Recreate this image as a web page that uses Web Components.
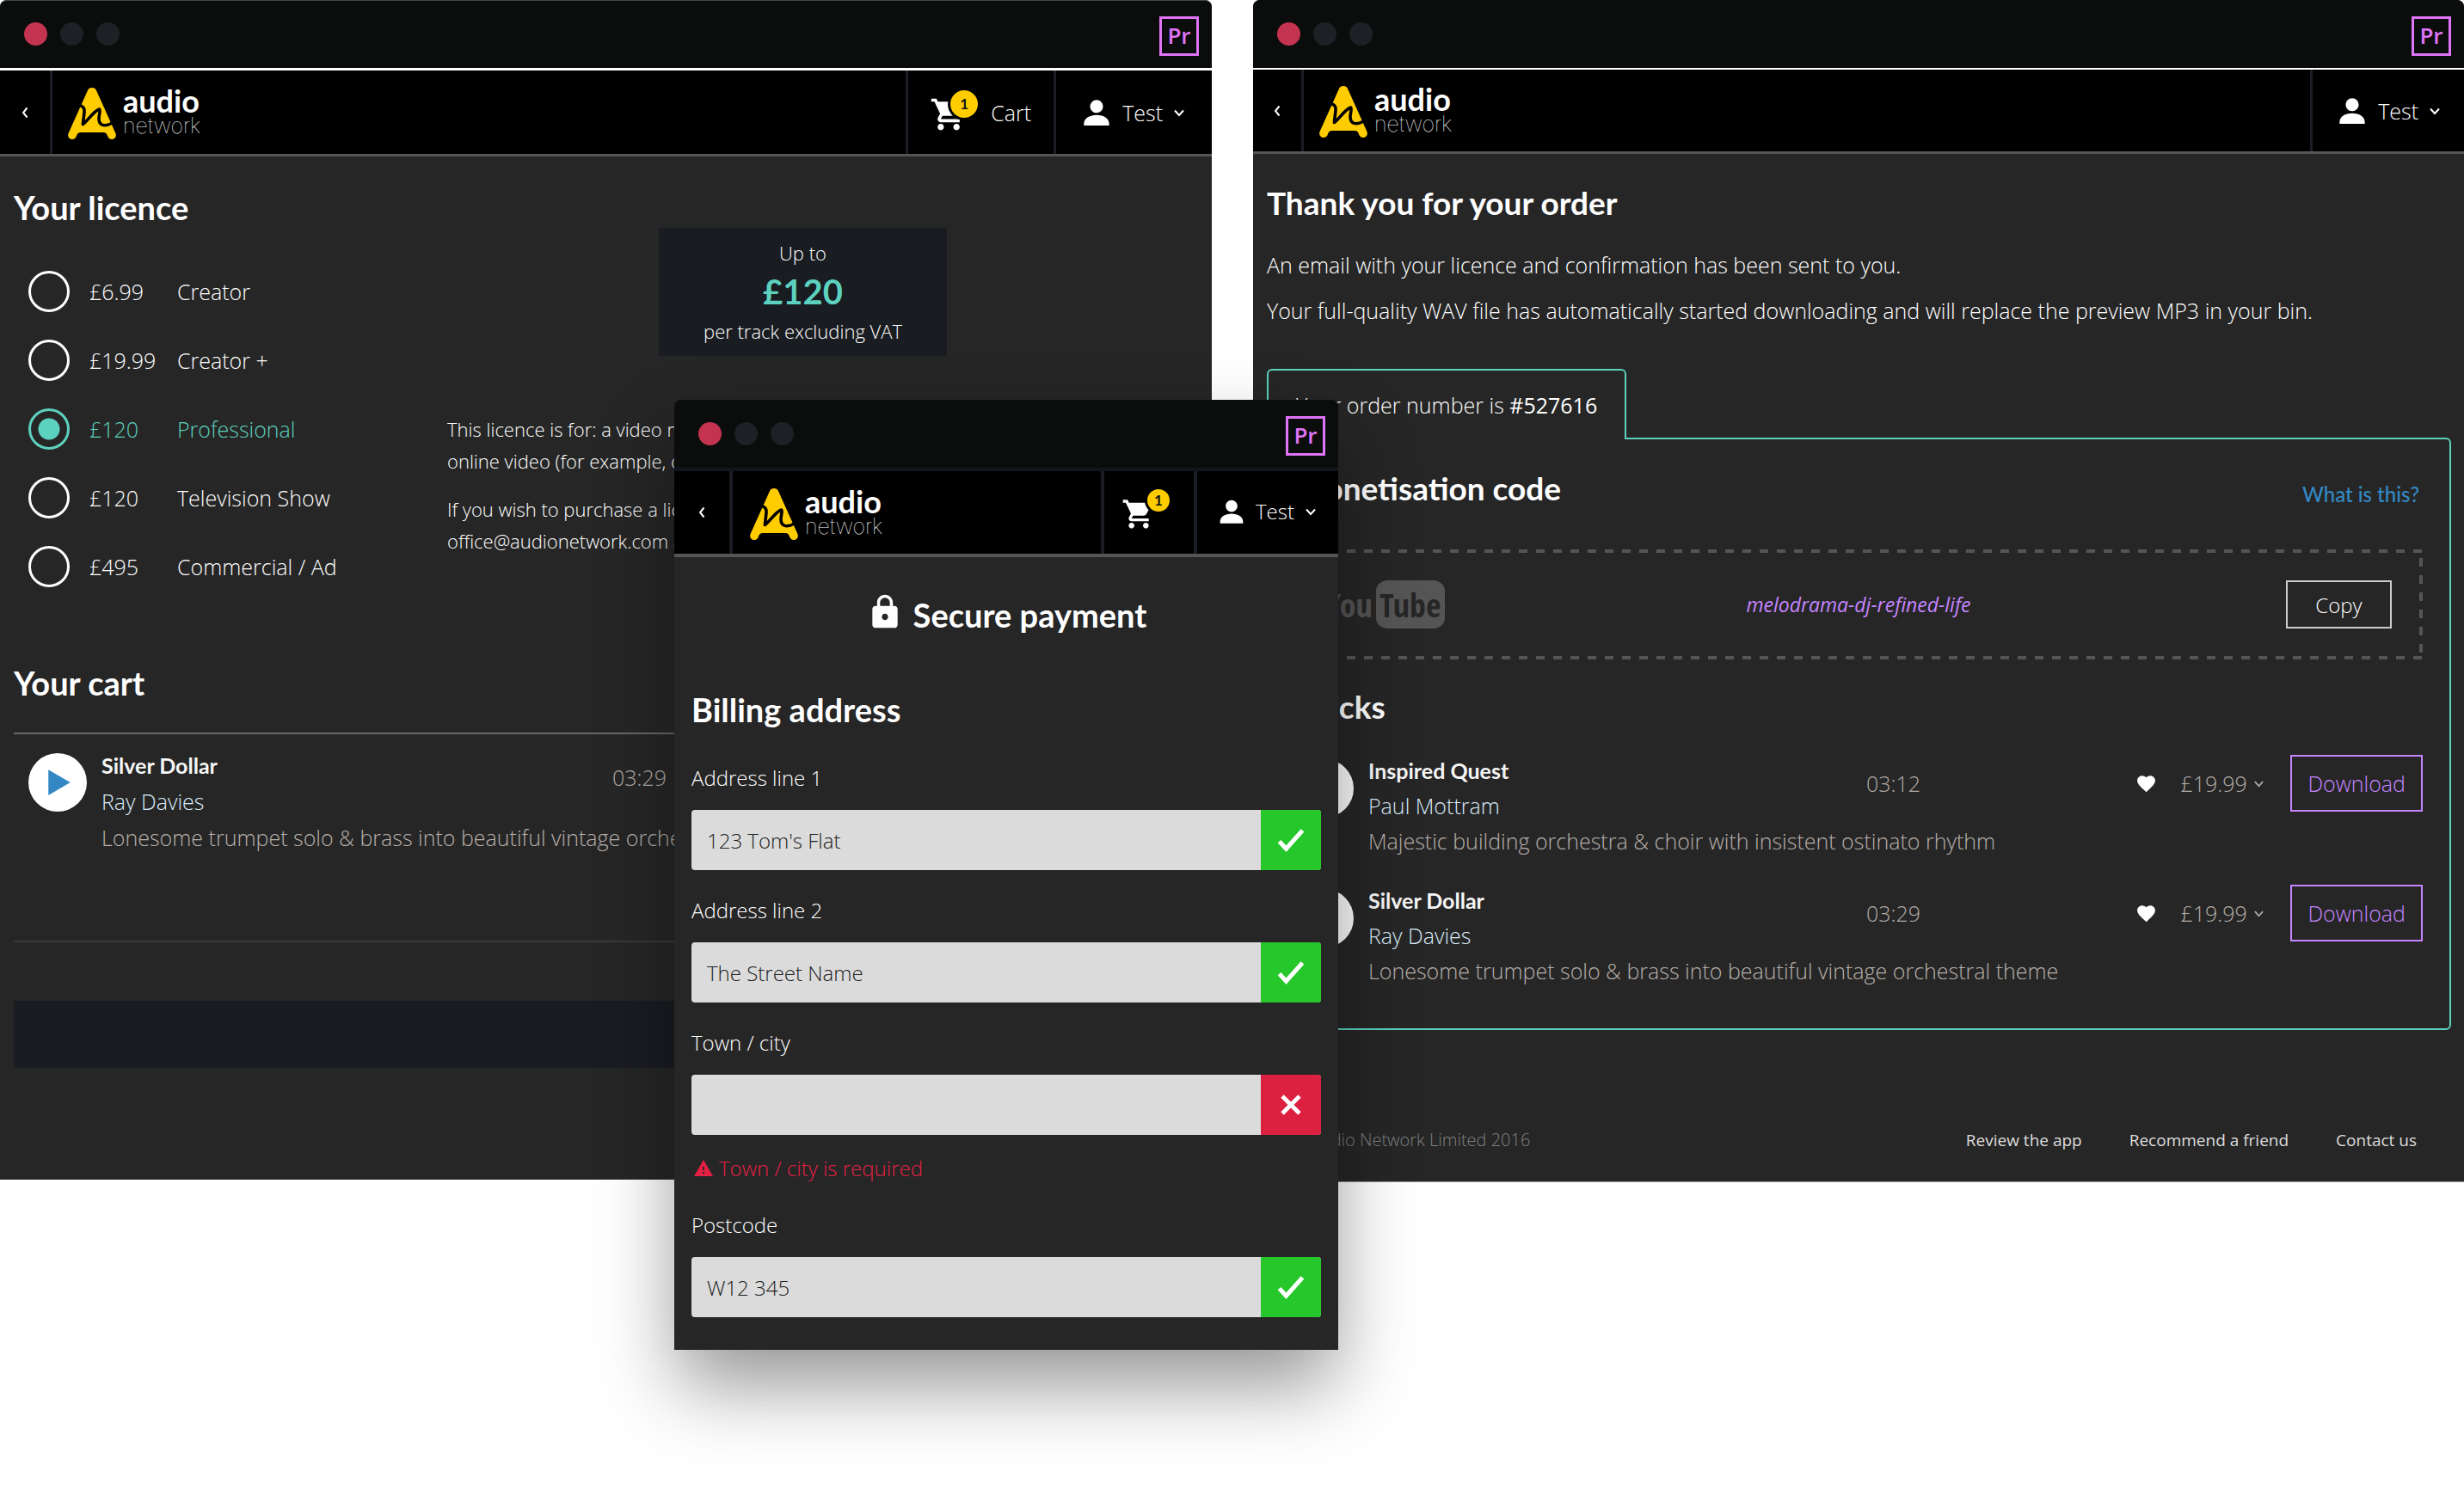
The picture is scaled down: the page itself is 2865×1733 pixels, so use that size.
<!DOCTYPE html>
<html lang="en">
<head>
<meta charset="utf-8">
<title>Audio Network for Premiere Pro</title>
<style>
  html, body { margin: 0; background: #fff; }
  body {
    --teal: #5dd1bf; --purple: #c585ff; --pink: #e074f8; --blue: #3388c4; --navy: #191c21;
    --head: Lato, "Open Sans", sans-serif;
    font: 300 25px "Open Sans", "Noto Sans", sans-serif;
    color: #fff;
  }
</style>
</head>
<body>
<desktop-stage>
  <app-window slot="cart" class="cart">
    <nav-bar slot="nav" cart="Cart"></nav-bar>
    <cart-view></cart-view>
  </app-window>
  <app-window slot="order" class="order">
    <nav-bar slot="nav"></nav-bar>
    <order-view></order-view>
  </app-window>
  <app-window slot="payment" class="payment">
    <nav-bar slot="nav" cart=""></nav-bar>
    <payment-view></payment-view>
  </app-window>
</desktop-stage>

<script>
const define = (name, render) => customElements.define(name, class extends HTMLElement {
  connectedCallback() {
    if (this.shadowRoot) return;
    this.attachShadow({ mode: 'open' }).innerHTML = '<style>*{box-sizing:border-box}</style>' + render(this);
  }
});

/* Three windows on one canvas: two side by side, the payment window over both. */
define('desktop-stage', () => `
<style>
  :host { display: grid; grid-template-columns: 784fr 625fr 48fr 99fr 1309fr; align-items: start; min-height: 100vh; overflow: hidden; }
  ::slotted(*) { grid-row: 1; }
  ::slotted([slot=cart]) { grid-column: 1 / 3; --nav-height: 97px; --top-edge: #444846; --bar-rule: 3px solid #fff; }
  ::slotted([slot=order]) { grid-column: 4 / 6; --nav-height: 95px; --bar-rule: 2px solid #fff; --back: 56px; --user-pad: 24px; --end: 28px; --title-size: 37px; border-bottom: 1px solid #8a8a8a; }
  ::slotted([slot=payment]) {
    grid-column: 2 / 5; margin-top: 465px; z-index: 1;
    --nav-height: 96px; --bar-rule: 4px solid #12161c; --rule: 4px; --back: 64px; --logo-pad: 20px; --icon: 40px; --nav-size: 24px;
    --pad: 20px; --cart-end: 44px; --end: 26px; --lift: 3px; --badge: 26px; --badge-left: 30px; --badge-top: -5px;
    box-shadow: 0 45px 90px -4px rgba(0,0,0,.42);
  }
</style>
<slot name="cart"></slot><slot name="order"></slot><slot name="payment"></slot>`);

define('app-window', () => `
<style>
  :host { display: block; background: #262626; border-radius: 8px 8px 0 0; min-width: 0; }
  header { display: flex; align-items: center; gap: 15px; height: 79px; padding: 0 15px 2px 28px; background: #0b0d0c;
    border-radius: 8px 8px 0 0; border-top: 1px solid var(--top-edge, #0b0d0c); }
  i { width: 27px; height: 27px; border-radius: 50%; background: #1e2025; }
  i:first-child { background: #c43350; }
  b { margin: 5px 0 0 auto; width: 46px; height: 46px; border: 3px solid var(--pink); color: var(--pink); font-size: 26px; font-weight: 600; line-height: 38px; text-align: center; }
  .rule { border-top: var(--bar-rule); }
</style>
<header><i></i><i></i><i></i><b>Pr</b></header>
<div class="rule"></div>
<slot name="nav"></slot>
<slot></slot>`);

const ICONS = {
  cart: '<path d="M7 18c-1.1 0-1.99.9-1.99 2S5.9 22 7 22s2-.9 2-2-.9-2-2-2zM1 2v2h2l3.6 7.59-1.35 2.45c-.16.28-.25.61-.25.96 0 1.1.9 2 2 2h12v-2H7.42c-.14 0-.25-.11-.25-.25l.03-.12.9-1.63h7.45c.75 0 1.41-.41 1.75-1.03l3.58-6.49A1 1 0 0 0 20 4H5.21l-.94-2H1zm16 16c-1.1 0-1.99.9-1.99 2s.89 2 1.99 2 2-.9 2-2-.9-2-2-2z"/>',
  user: '<path d="M12 12.2c2.3 0 4.1-1.9 4.1-4.1S14.3 4 12 4 7.900 5.900 7.900 8.100s1.800 4.100 4.100 4.100zM12 13.500c-4.500 0-8 2.200-8 5.500v1.200h16V19c0-3.300-3.500-5.500-8-5.500z"/>',
  lock: '<path d="M18 8h-1V6c0-2.760-2.240-5-5-5S7 3.240 7 6v2H6c-1.100 0-2 .9-2 2v10c0 1.100.9 2 2 2h12c1.100 0 2-.9 2-2V10c0-1.100-.9-2-2-2zm-6 9c-1.100 0-2-.9-2-2s.9-2 2-2 2 .9 2 2-.9 2-2 2zm3.100-9H8.900V6c0-1.710 1.390-3.100 3.100-3.100s3.100 1.390 3.100 3.100v2z"/>',
  warn: '<path d="M1 21h22L12 2 1 21zm12-3h-2v-2h2v2zm0-4h-2v-4h2v4z"/>',
  heart: '<path d="M12 21.350l-1.450-1.320C5.400 15.360 2 12.280 2 8.500 2 5.420 4.420 3 7.500 3c1.740 0 3.410.81 4.500 2.090C13.090 3.810 14.760 3 16.500 3 19.580 3 22 5.420 22 8.500c0 3.780-3.400 6.860-8.550 11.540L12 21.350z"/>',
  play: '<path d="M3 1.500v21l18-10.500z"/>',
  down: '<path d="M2 7l10 11L22 7" fill="none" stroke="currentColor" stroke-width="4"/>',
  back: '<path d="M17 1L8 12l9 11" fill="none" stroke="currentColor" stroke-width="4"/>',
  tick: '<path d="M3.500 13l5 5.500L20.500 5" fill="none" stroke="currentColor" stroke-width="3.200"/>',
  cross: '<path d="M4 4l16 16M20 4L4 20" fill="none" stroke="currentColor" stroke-width="3.800"/>'
};
define('ui-icon', el => `
<style>
  :host { display: inline-block; width: 24px; height: 24px; flex: none; }
  svg { display: block; width: 100%; height: 100%; fill: currentColor; overflow: visible; }
</style>
<svg viewBox="0 0 24 24" aria-hidden="true">${ICONS[el.getAttribute('name')]}</svg>`);

define('brand-logo', () => `
<style>
  :host { display: flex; gap: 8px; height: 60px; color: #fff; }
  svg { width: 56px; height: 60px; flex: none; }
  span { display: block; }
  .a { font: 700 36px/30px var(--head); }
  .n { font: 100 25px/28px Inter, sans-serif; }
</style>
<svg viewBox="0 0 56 60" aria-hidden="true">
  <path fill="#fc0" d="M28 0C25.200 0 23.500 1.500 22.600 4L.6 53C-1 57 2 60 5 60s4.200-2 5-4c.8-2.500 2-4 5-4h26c3 0 4.200 1.500 5 4 .8 2 2 4 5 4s6-3 4.400-7l-22-49C32.500 1.500 30.800 0 28 0z"/>
  <path fill="none" stroke="#000" stroke-width="3.600" stroke-linejoin="round" d="M12.500 20.500c5 .5 7 3 6.500 8L17.400 42.500C22 39.500 30 27 36.500 25c1.800 1.500-.5 6-.5 11 0 8 6.500 10 15.500 5"/>
</svg>
<div><span class="a">audio</span><span class="n">network</span></div>`);

define('nav-bar', el => `
<style>
  :host { display: flex; align-items: stretch; height: var(--nav-height); background: #000; border-bottom: var(--rule, 3px) solid #555; box-sizing: content-box; font-size: var(--nav-size, 25px); }
  button { all: unset; display: flex; align-items: center; box-sizing: border-box; cursor: pointer; }
  .back { width: var(--back, 58px); justify-content: center; }
  .home { flex: 1; border-left: var(--rule, 3px) solid #1a1d23; padding: 3px 0 0 var(--logo-pad, 18px); display: flex; align-items: center; }
  .cell { border-left: var(--rule, 3px) solid #1a1d23; padding-left: var(--pad, 25px); }
  .big { width: var(--icon, 44px); height: var(--icon, 44px); }
  .cart { padding-right: var(--cart-end, 26px); }
  .cart .wrap { position: relative; display: flex; padding-top: 4px; }
  .cart .label { padding-left: 27px; }
  .badge { position: absolute; left: var(--badge-left, 24px); top: var(--badge-top, -2px); width: var(--badge, 32px); height: var(--badge, 32px); line-height: var(--badge, 32px);
    border-radius: 50%; background: #fc0; color: #111; box-shadow: 0 0 0 3px #000; text-align: center; font-family: var(--head); font-size: 17px; font-weight: 700; }
  .user { padding: 0 var(--end, 32px) var(--lift, 0) var(--user-pad, var(--pad, 25px)); }
  .user .label { padding: 0 13px 0 8px; }
  .small { width: 12px; height: 12px; }
</style>
<button class="back" aria-label="Back"><ui-icon class="small" name="back"></ui-icon></button>
<div class="home"><brand-logo></brand-logo></div>
${el.hasAttribute('cart') ? `<button class="cell cart" aria-label="Cart, 1 item"><span class="wrap"><ui-icon class="big" name="cart"></ui-icon><span class="badge">1</span></span>${el.getAttribute('cart') ? `<span class="label">${el.getAttribute('cart')}</span>` : ''}</button>` : ''}
<button class="cell user"><ui-icon class="big" name="user"></ui-icon><span class="label">Test</span><ui-icon class="small" name="down"></ui-icon></button>`);

define('section-title', () => `
<style>
  :host { display: block; }
  h2 { margin: 0; font: 700 var(--title-size, 38px)/48px var(--head); color: #fff; white-space: nowrap; }
</style>
<h2><slot></slot></h2>`);

const OPTIONS = [['£6.99', 'Creator'], ['£19.99', 'Creator +'], ['£120', 'Professional'], ['£120', 'Television Show'], ['£495', 'Commercial / Ad']];
define('licence-picker', () => `
<style>
  :host { display: grid; gap: 32px; }
  label { display: flex; align-items: center; height: 48px; white-space: nowrap; }
  label:has(:checked) { color: var(--teal); }
  input { appearance: none; margin: 0 23px 0 0; width: 48px; height: 48px; flex: none; border: 3px solid #fff; border-radius: 50%; }
  input:checked { border-color: var(--teal); background: radial-gradient(circle, var(--teal) 12px, transparent 13px); }
  .price { width: 102px; }
</style>
${OPTIONS.map(([p, n], i) => `<label><input type="radio" name="licence"${i === 2 ? ' checked' : ''}><span class="price">${p}</span><span>${n}</span></label>`).join('')}`);

define('price-box', () => `
<style>
  :host { display: block; width: 335px; padding: 12px 0; background: var(--navy); color: #fff; text-align: center; font-size: 22px; }
  span { display: block; line-height: 34px; }
  strong { display: block; font: 700 40px/57px var(--head); color: var(--teal); }
</style>
<span>Up to</span><strong>£120</strong><span>per track excluding VAT</span>`);

define('track-row', el => `
<style>
  :host { display: grid; grid-template-columns: 68px var(--time-col) 1fr auto; grid-auto-rows: var(--line); line-height: var(--line); white-space: nowrap; }
  .play { all: unset; grid-row: 1 / 3; width: 68px; height: 68px; margin-top: 7px; border-radius: 50%; background: #fff; color: var(--blue); display: flex; align-items: center; justify-content: center; cursor: pointer; }
  .play ui-icon { width: 34px; height: 34px; margin-left: 4px; }
  .title, .artist, .desc { padding-left: 17px; grid-column: 2; }
  .title { font-family: var(--head); font-weight: 700; color: #f6f6f6; }
  .artist { color: #d9ebf8; }
  .desc { grid-column: 2 / 5; grid-row: 3; color: #b8b0ab; }
  .time { grid-column: 3; grid-row: 1 / 3; line-height: 70px; color: #b3acA8; }
  .actions { grid-column: 4; grid-row: 1 / 3; height: 70px; display: flex; align-items: center; }
  .heart { width: 25px; height: 25px; color: #fff; margin-right: 27px; }
  select { appearance: none; border: 0; padding: 0; margin: 0 8px 0 0; background: none; color: #b3aca8; font: inherit; line-height: 40px; }
  .down { width: 11px; height: 11px; color: #b3aca8; margin-right: 31px; }
  .download { border: 2px solid var(--purple); background: none; color: var(--purple); font: inherit; height: 66px; padding: 0 18px; cursor: pointer; }
</style>
<button class="play" aria-label="Play"><ui-icon name="play"></ui-icon></button>
<span class="title">${el.getAttribute('name')}</span>
<span class="artist">${el.getAttribute('artist')}</span>
<span class="desc"><slot></slot></span>
<span class="time">${el.getAttribute('time')}</span>
${el.hasAttribute('price') ? `<div class="actions"><ui-icon class="heart" name="heart"></ui-icon><select aria-label="Licence price"><option>${el.getAttribute('price')}</option></select><ui-icon class="down" name="down"></ui-icon><button class="download">Download</button></div>` : ''}`);

define('cart-view', () => `
<style>
  :host { display: block; padding: 35px 16px 130px; --line: 42px; --time-col: 611px; }
  .choose { display: grid; grid-template-columns: 504px 1fr; }
  licence-picker { padding: 50px 0 0 17px; }
  price-box { margin-left: 246px; }
  .terms { padding-top: 67px; font-size: 22px; line-height: 37px; white-space: nowrap; }
  p { margin: 0 0 19px; }
  .yours { margin-top: 87px; }
  .list { margin-top: 34px; padding: 15px 0 99px 17px; border-top: 2px solid #686868; border-bottom: 2px solid #3a3a3a; }
  .total { margin-top: 68px; height: 78px; background: var(--navy); }
</style>
<section-title>Your licence</section-title>
<div class="choose">
  <licence-picker></licence-picker>
  <div><price-box></price-box>
    <div class="terms"><p>This licence is for: a video made as an<br>online video (for example, on the web)</p>
    <p>If you wish to purchase a licence, email<br>office@audionetwork.com and ask us</p></div>
  </div>
</div>
<section-title class="yours">Your cart</section-title>
<div class="list"><track-row name="Silver Dollar" artist="Ray Davies" time="03:29">Lonesome trumpet solo &amp; brass into beautiful vintage orchestral theme</track-row></div>
<div class="total"></div>`);

define('youtube-logo', () => `
<style>
  :host { display: flex; align-items: center; gap: 4px; color: #555; font: 700 38px/56px "Open Sans Condensed", "Roboto Condensed", sans-serif; }
  b { width: 80px; height: 56px; border-radius: 14px / 12px; background: #555; color: #262626; text-align: center; }
</style>
<span>You</span><b>Tube</b>`);

define('order-view', () => `
<style>
  :host { display: block; padding: 33px 15px 0 16px; --line: 41px; --time-col: 596px; }
  .intro { margin: 22px 0 41px; line-height: 53px; }
  p { margin: 0; }
  .tab { position: relative; width: max-content; margin-bottom: -2px; padding: 0 32px; border: 2px solid var(--teal); border-bottom: 0; border-radius: 6px 6px 0 0; background: #262626; line-height: 80px; }
  .panel { border: 2px solid var(--teal); border-radius: 0 6px 6px 6px; padding: 33px 31px 46px; }
  .top { display: flex; justify-content: space-between; align-items: flex-end; }
  a { color: inherit; text-decoration: none; }
  .top a { color: var(--blue); font: 500 24px/34px var(--head); padding-right: 4px; }
  .code { margin-top: 47px; height: 128px; padding: 0 36px 0 35px; display: grid; grid-template-columns: 1fr auto 1fr; align-items: center;
    --h: repeating-linear-gradient(90deg, #555 0 10px, transparent 10px 20px); --v: repeating-linear-gradient(#555 0 10px, transparent 10px 20px);
    background: var(--h) 0 0 / 100% 4px no-repeat, var(--h) 0 100% / 100% 4px no-repeat, var(--v) 0 10px / 4px 110px no-repeat, var(--v) 100% 10px / 4px 110px no-repeat; }
  em { color: var(--purple); font-size: 23px; font-weight: 400; }
  .copy { justify-self: end; width: 123px; height: 56px; border: 2px solid #ccc; background: none; color: #fff; font: inherit; font-size: 24px; }
  .tracks { margin-top: 31px; }
  .rows { display: grid; gap: 28px; margin-top: 30px; }
  footer { display: flex; margin: 108px 40px 0 29px; padding-bottom: 28px; gap: 55px; font-size: 19px; font-weight: 400; line-height: 40px; color: #ddd; }
  footer span { margin-right: auto; color: #808080; font-size: 20px; font-weight: 300; }
</style>
<section-title>Thank you for your order</section-title>
<div class="intro"><p>An email with your licence and confirmation has been sent to you.</p>
<p>Your full-quality WAV file has automatically started downloading and will replace the preview MP3 in your bin.</p></div>
<div class="tab">Your order number is <b>#527616</b></div>
<div class="panel">
  <div class="top"><section-title>Monetisation code</section-title><a href="#help">What is this?</a></div>
  <div class="code"><youtube-logo></youtube-logo><em>melodrama-dj-refined-life</em><button class="copy">Copy</button></div>
  <section-title class="tracks">Tracks</section-title>
  <div class="rows">
    <track-row name="Inspired Quest" artist="Paul Mottram" time="03:12" price="£19.99">Majestic building orchestra &amp; choir with insistent ostinato rhythm</track-row>
    <track-row name="Silver Dollar" artist="Ray Davies" time="03:29" price="£19.99">Lonesome trumpet solo &amp; brass into beautiful vintage orchestral theme</track-row>
  </div>
</div>
<footer><span>© Audio Network Limited 2016</span><a href="#review">Review the app</a><a href="#recommend">Recommend a friend</a><a href="#contact">Contact us</a></footer>`);

define('form-field', el => {
  const error = el.getAttribute('error');
  return `
<style>
  :host { display: block; }
  label { display: block; margin-bottom: 19px; font-size: 24px; line-height: 36px; }
  .box { display: flex; height: 70px; border-radius: 4px; overflow: hidden; background: #dbdbdb; }
  input { flex: 1; min-width: 0; border: 0; outline: 0; margin: 0; padding: 0 18px; background: none; color: #222; font: 300 24px "Open Sans", sans-serif; }
  .state { width: 70px; display: flex; align-items: center; justify-content: center; color: #fff; background: ${error ? '#dc2040' : '#25c72b'}; }
  .state ui-icon { width: ${error ? 30 : 38}px; height: ${error ? 30 : 38}px; }
  .error { display: flex; align-items: center; gap: 6px; margin: 20px 0 0 2px; color: #e52045; font-size: 24px; line-height: 38px; }
</style>
<label for="f">${el.getAttribute('label')}</label>
<div class="box"><input id="f" type="text" value="${el.getAttribute('value') || ''}"><span class="state"><ui-icon name="${error ? 'cross' : 'tick'}"></ui-icon></span></div>
${error ? `<div class="error" role="alert"><ui-icon name="warn"></ui-icon><span>${error}</span></div>` : ''}`;
});

define('payment-view', () => `
<style>
  :host { display: block; padding: 43px 20px 38px; }
  .secure { display: flex; justify-content: center; align-items: center; gap: 11px; margin-bottom: 62px; }
  .secure ui-icon { width: 44px; height: 44px; color: #fff; margin-top: -6px; }
  form { display: grid; gap: 29px; margin-top: 38px; }
</style>
<div class="secure"><ui-icon name="lock"></ui-icon><section-title>Secure payment</section-title></div>
<section-title>Billing address</section-title>
<form>
  <form-field label="Address line 1" value="123 Tom's Flat"></form-field>
  <form-field label="Address line 2" value="The Street Name"></form-field>
  <form-field label="Town / city" error="Town / city is required"></form-field>
  <form-field label="Postcode" value="W12 345"></form-field>
</form>`);
</script>
</body>
</html>
